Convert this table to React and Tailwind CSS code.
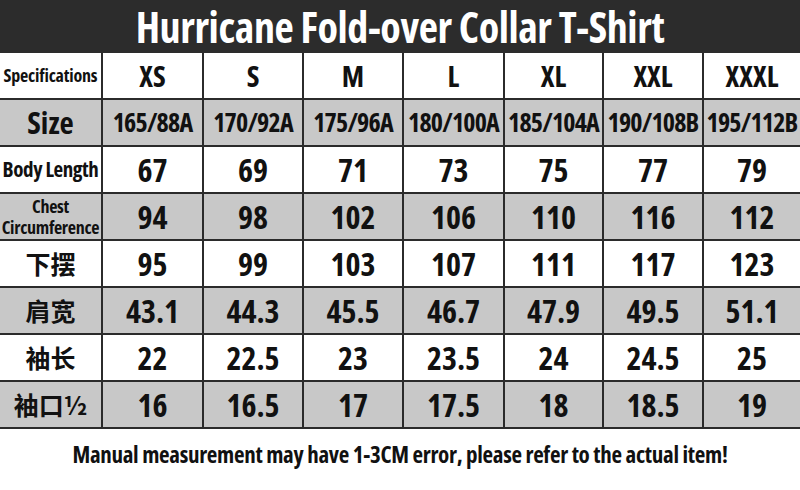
const sizes = ["XS", "S", "M", "L", "XL", "XXL", "XXXL"];

const rows = [
  { label: "Size", kind: "size", values: ["165/88A", "170/92A", "175/96A", "180/100A", "185/104A", "190/108B", "195/112B"] },
  { label: "Body Length", kind: "en", values: ["67", "69", "71", "73", "75", "77", "79"] },
  { label: "Chest Circumference", kind: "two", values: ["94", "98", "102", "106", "110", "116", "112"] },
  { label: "下摆", kind: "cjk", values: ["95", "99", "103", "107", "111", "117", "123"] },
  { label: "肩宽", kind: "cjk", values: ["43.1", "44.3", "45.5", "46.7", "47.9", "49.5", "51.1"] },
  { label: "袖长", kind: "cjk", values: ["22", "22.5", "23", "23.5", "24", "24.5", "25"] },
  { label: "袖口½", kind: "cjk", values: ["16", "16.5", "17", "17.5", "18", "18.5", "19"] },
];

const labelClass = {
  size: "text-[31px]",
  en: "text-[21px] tracking-[-0.4px]",
  two: "text-[18px] leading-[21px] tracking-[-0.3px] flex-col",
  cjk: "text-[25px] font-['Noto_Sans_CJK_SC',sans-serif] font-bold",
};

function Cell({ children, gray, last, className = "" }) {
  return (
    <div
      className={`h-[47px] flex items-center justify-center whitespace-nowrap border-b-2 border-[#2b2b2b] ${
        last ? "" : "border-r-2"
      } ${gray ? "bg-[#c8c8c8]" : "bg-white"} ${className}`}
    >
      {children}
    </div>
  );
}

export default function App() {
  return (
    <div className="w-[800px] h-[490px] bg-white text-[#111] font-bold overflow-hidden font-['Open_Sans','Noto_Sans_CJK_SC',sans-serif] font-stretch-condensed">
      <div className="h-[53px] bg-[#2c2c2c] flex items-center justify-center">
        <h1 className="text-white text-[42px] leading-[52px] tracking-[-0.4px]">
          Hurricane Fold-over Collar T-Shirt
        </h1>
      </div>

      <div className="grid grid-cols-[103px_101px_100px_100px_101px_99px_100px_1fr]">
        <Cell className="text-[18px] tracking-[-0.2px]">Specifications</Cell>
        {sizes.map((s, i) => (
          <Cell key={s} last={i === sizes.length - 1} className="text-[29px]">
            {s}
          </Cell>
        ))}

        {rows.map((row, r) => {
          const gray = r % 2 === 0;
          return [
            <Cell key={row.label} gray={gray} className={labelClass[row.kind]}>
              {row.kind === "two" ? (
                <>
                  <span>Chest</span>
                  <span>Circumference</span>
                </>
              ) : (
                row.label
              )}
            </Cell>,
            ...row.values.map((v, i) => (
              <Cell
                key={row.label + i}
                gray={gray}
                last={i === row.values.length - 1}
                className={row.kind === "size" ? "text-[26px] tracking-[-0.8px]" : "text-[32px]"}
              >
                {v}
              </Cell>
            )),
          ];
        })}
      </div>

      <p className="text-center text-[23px] leading-tight mt-[11px] tracking-[-0.3px]">
        Manual measurement may have 1-3CM error, please refer to the actual item!
      </p>
    </div>
  );
}
